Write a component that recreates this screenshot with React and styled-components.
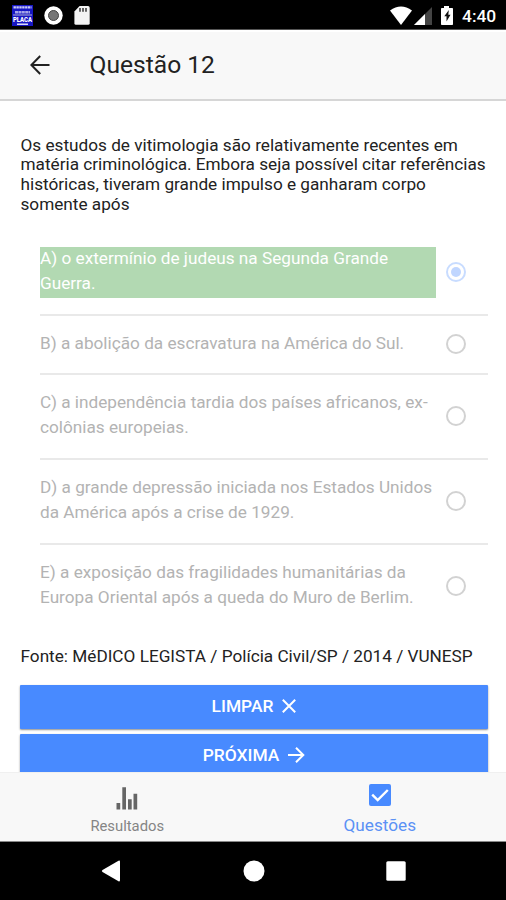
import { useState } from "react";
import styled, { createGlobalStyle } from "styled-components";

const question = {
  title: "Questão 12",
  lines: [
    "Os estudos de vitimologia são relativamente recentes em",
    "matéria criminológica. Embora seja possível citar referências",
    "históricas, tiveram grande impulso e ganharam corpo",
    "somente após",
  ],
  source: "Fonte: MéDICO LEGISTA / Polícia Civil/SP / 2014 / VUNESP",
  answer: "A",
};

const options = [
  { id: "A", lines: ["A) o extermínio de judeus na Segunda Grande", "Guerra."] },
  { id: "B", lines: ["B) a abolição da escravatura na América do Sul."] },
  { id: "C", lines: ["C) a independência tardia dos países africanos, ex-", "colônias europeias."] },
  { id: "D", lines: ["D) a grande depressão iniciada nos Estados Unidos", "da América após a crise de 1929."] },
  { id: "E", lines: ["E) a exposição das fragilidades humanitárias da", "Europa Oriental após a queda do Muro de Berlim."] },
];

const App = () => {
  const [selected, setSelected] = useState("A");

  return (
    <Screen>
      <GlobalStyle />

      <StatusBar>
        <StatusGroup>
          <AppBadge />
          <RecordIcon />
          <CardIcon />
        </StatusGroup>
        <StatusIcons />
        <Clock>4:40</Clock>
      </StatusBar>

      <Header>
        <BackButton aria-label="Voltar">
          <svg width="20" height="20" viewBox="0 0 20 20" fill="none" stroke="#222" strokeWidth="2">
            <path d="M19.5 10H1.5M10.2 1L1.4 10l8.8 9" />
          </svg>
        </BackButton>
        <Title>{question.title}</Title>
      </Header>

      <Content>
        <Statement>
          {question.lines.map((line) => (
            <Line key={line}>{line}</Line>
          ))}
        </Statement>

        <Options>
          {options.map((option) => (
            <Option key={option.id} onClick={() => setSelected(option.id)}>
              <OptionText $correct={selected === option.id && option.id === question.answer}>
                {option.lines.map((line) => (
                  <Line key={line}>{line}</Line>
                ))}
              </OptionText>
              <Radio $checked={selected === option.id} />
            </Option>
          ))}
        </Options>

        <Source>{question.source}</Source>

        <Button onClick={() => setSelected("")}>
          LIMPAR
          <svg width="14" height="14" viewBox="0 0 14 14" fill="none" stroke="#fff" strokeWidth="2">
            <path d="M.8.8l12.4 12.4M13.2.8L.8 13.2" />
          </svg>
        </Button>
        <Button>
          PRÓXIMA
          <svg width="17" height="16" viewBox="0 0 17 16" fill="none" stroke="#fff" strokeWidth="2">
            <path d="M0 8h15.2M8 .8L15.3 8 8 15.2" />
          </svg>
        </Button>
      </Content>

      <Tabs>
        <Tab>
          <TabIcon>
            <svg width="22" height="24" viewBox="0 0 22 24" fill="#666">
              <path d="M.5 17h3.7v6.5H.5zM6.3 1.3H10v22.2H6.3zM12 13.2h3.7v10.3H12zM17.5 7.8h3.7v15.7h-3.7z" />
            </svg>
          </TabIcon>
          <TabLabel>Resultados</TabLabel>
        </Tab>
        <Tab $active>
          <TabIcon>
            <svg width="22" height="24" viewBox="0 0 22 24">
              <rect y="0" width="22" height="22" rx="2" fill="#488aff" />
              <path d="M3.2 10.7l5.5 5.4L18.8 6" fill="none" stroke="#fff" strokeWidth="2.4" />
            </svg>
          </TabIcon>
          <TabLabel $active>Questões</TabLabel>
        </Tab>
      </Tabs>

      <NavBar>
        <svg width="20" height="22" viewBox="0 0 20 22" fill="#fff">
          <path d="M17.5.8Q19 0 19 2v18q0 2-1.5 1.2L1.5 12q-1.4-1 0-2z" />
        </svg>
        <svg width="22" height="22" viewBox="0 0 22 22" fill="#fff">
          <circle cx="11" cy="11" r="10.5" />
        </svg>
        <svg width="20" height="20" viewBox="0 0 20 20" fill="#fff">
          <rect x=".3" y=".3" width="19.4" height="19.4" rx="1.5" />
        </svg>
      </NavBar>
    </Screen>
  );
};

export default App;

const AppBadge = () => (
  <svg width="21" height="21" viewBox="0 0 21 21">
    <rect width="21" height="21" fill="#1717c4" />
    <path d="M1.5 2.3h18" stroke="#c9c9f5" strokeWidth="2.2" strokeDasharray="2.4 .5" />
    <path d="M3 7.2h15" stroke="#a5a5e8" strokeWidth="2.6" strokeDasharray="3 .4" />
    <path d="M1 10h19" stroke="#7777cc" strokeWidth="1.6" />
    <text x="1" y="16.6" fill="#fff" fontSize="6.6" fontWeight="900" textLength="19" lengthAdjust="spacingAndGlyphs">
      PLACA
    </text>
    <path d="M5 19.2h11" stroke="#fff" strokeWidth="1.3" />
  </svg>
);

const RecordIcon = () => (
  <svg width="19" height="19" viewBox="0 0 19 19">
    <circle cx="9.5" cy="9.5" r="9.2" fill="#fff" />
    <circle cx="9.5" cy="9.5" r="5" fill="#777" stroke="#444" strokeWidth="1" />
  </svg>
);

const CardIcon = () => (
  <svg width="16" height="19" viewBox="0 0 16 19">
    <path d="M5.6 0H14q1.7 0 1.7 1.7v15.5q0 1.6-1.7 1.6H2Q.4 18.8.4 17.2V5.4z" fill="#f4f4f4" />
    <path d="M6 2.1v3.7M9 2.1v3.7M12 2.1v3.7" stroke="#333" strokeWidth="1.5" />
  </svg>
);

const StatusIcons = () => (
  <svg width="64" height="20" viewBox="0 0 64 20">
    <path d="M11 19L0 4.5Q11-3.5 22 4.5z" fill="#fff" />
    <path d="M42 1v18H24z" fill="#444" />
    <path d="M35 8v11H24z" fill="#fff" />
    <path d="M54 0h5v2h3.2q.8 0 .8.8v15.4q0 .8-.8.8H51.8q-.8 0-.8-.8V2.8q0-.8.8-.8H54z" fill="#fff" />
    <path d="M58.8 4l-4.5 6.2h2.2v5.2l4-6.6h-2.2z" fill="#111" />
  </svg>
);

const GlobalStyle = createGlobalStyle`
  * {
    box-sizing: border-box;
  }

  body {
    margin: 0;
    background: #fff;
    font-family: Roboto, "Liberation Sans", sans-serif;
  }

  svg {
    display: block;
    flex: none;
  }
`

const Screen = styled.div`
  display: flex;
  flex-direction: column;
  width: 506px;
  height: 900px;
  overflow: hidden;
`

const StatusBar = styled.div`
  display: flex;
  align-items: center;
  height: 30px;
  flex: none;
  padding: 2px 8px 0 12px;
  background: #000;
  border-bottom: 1px solid #555;
`

const StatusGroup = styled.div`
  display: flex;
  align-items: center;
  gap: 11px;
  flex: 1;
`

const Clock = styled.span`
  width: 36px;
  margin-left: 8px;
  color: #fff;
  font-size: 17.4px;
  font-weight: 500;
  line-height: 20px;
  white-space: nowrap;
`

const Header = styled.div`
  display: flex;
  align-items: center;
  height: 71px;
  flex: none;
  padding: 0 30px 2px;
  background: #f8f8f8;
  border-top: 2px solid #fff;
  border-bottom: 2px solid #d6d6d6;
`

const BackButton = styled.button`
  display: flex;
  padding: 0;
  border: 0;
  background: none;
`

const Title = styled.h1`
  margin: 0 0 0 39.5px;
  color: #222;
  font-size: 24.6px;
  font-weight: 400;
  line-height: 30px;
`

const Content = styled.div`
  flex: 1;
  min-height: 0;
  padding: 34.5px 18px 0 20px;
  overflow: hidden;
`

const Statement = styled.div`
  padding-left: 0.5px;
  color: #222;
  font-size: 17.22px;
  line-height: 19.7px;
`

const Line = styled.div`
  white-space: nowrap;
`

const Options = styled.div`
  margin: 16.3px 0 0 20px;
`

const Option = styled.div`
  display: flex;
  align-items: center;
  padding: 16px 0 15.5px;
  border-bottom: 2px solid #e9e9e9;

  &:last-child {
    border-bottom: 0;
  }
`

const OptionText = styled.div`
  width: 396px;
  color: ${(props) => (props.$correct ? "#fff" : "#b3b3b3")};
  background: ${(props) => (props.$correct ? "#b2d9b2" : "transparent")};
  font-size: 17.22px;
  line-height: 25.7px;

  ${Line} {
    margin: -1px 0 1px;
  }
`

const Radio = styled.div`
  display: flex;
  width: 20px;
  height: 20px;
  margin: 0 0 0 10px;
  border: 2px solid ${(props) => (props.$checked ? "#c8dcff" : "#d2d2d2")};
  border-radius: 50%;

  &::after {
    content: "";
    width: 10px;
    height: 10px;
    margin: auto;
    border-radius: 50%;
    background: ${(props) => (props.$checked ? "#c0d6ff" : "transparent")};
  }
`

const Source = styled.div`
  margin-top: 18.2px;
  padding-left: 0.5px;
  color: #222;
  font-size: 17.22px;
  line-height: 20px;
  white-space: nowrap;
`

const Button = styled.button`
  display: flex;
  align-items: center;
  justify-content: center;
  gap: 9px;
  width: 100%;
  height: 44px;
  margin-top: 5px;
  padding: 0 0 2px;
  border: 0;
  border-radius: 1px;
  background: #488aff;
  box-shadow: 0 1px 2px rgba(0, 0, 0, 0.45);
  color: #fff;
  font-family: inherit;
  font-size: 17.4px;
  font-weight: 500;

  ${Source} + & {
    margin-top: 19px;
  }
`

const Tabs = styled.div`
  display: flex;
  height: 70px;
  flex: none;
  padding-left: 1px;
  background: #f8f8f8;
  border-top: 1px solid #f0f0f0;
  border-bottom: 1px solid #888;
`

const Tab = styled.div`
  display: flex;
  flex: 1;
  flex-direction: column;
  align-items: center;
  padding-top: ${(props) => (props.$active ? "11px" : "13px")};
`

const TabIcon = styled.div`
  height: 24px;
`

const TabLabel = styled.span`
  margin-top: ${(props) => (props.$active ? "7px" : "6px")};
  color: ${(props) => (props.$active ? "#5b91f5" : "#858585")};
  font-size: ${(props) => (props.$active ? "17.2px" : "14.8px")};
  line-height: 20px;
`

const NavBar = styled.div`
  display: flex;
  align-items: center;
  justify-content: space-between;
  height: 58px;
  flex: none;
  padding: 0 100px 0 101px;
  background: #000;
`
